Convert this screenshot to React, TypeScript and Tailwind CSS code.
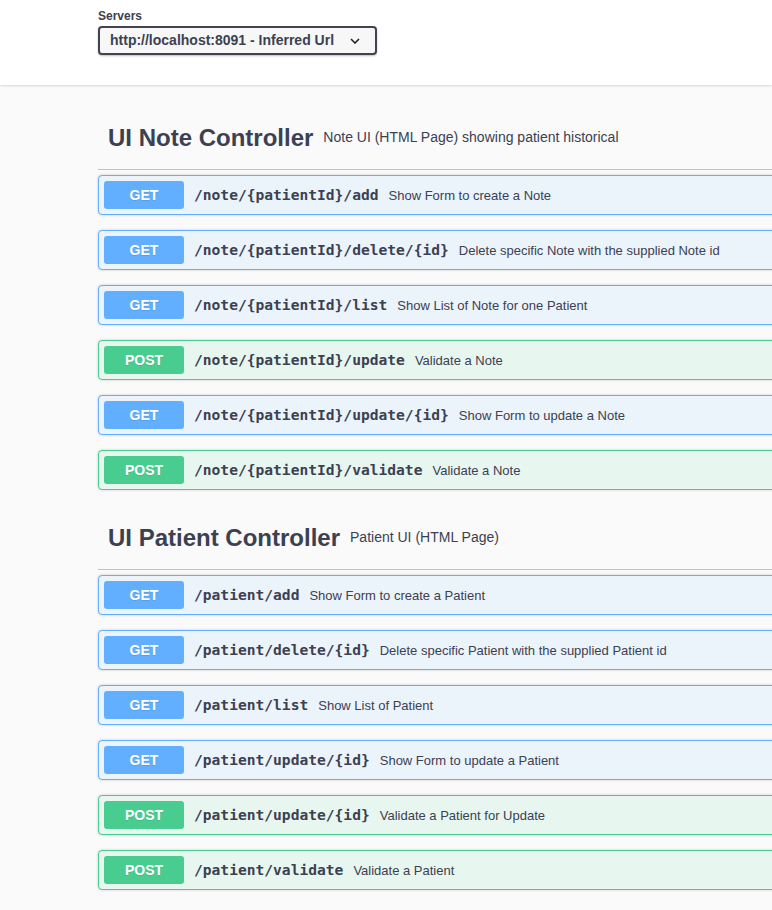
import React from "react";

type Op = { method: "GET" | "POST"; path: string; desc: string };

const noteOps: Op[] = [
  { method: "GET", path: "/note/{patientId}/add", desc: "Show Form to create a Note" },
  { method: "GET", path: "/note/{patientId}/delete/{id}", desc: "Delete specific Note with the supplied Note id" },
  { method: "GET", path: "/note/{patientId}/list", desc: "Show List of Note for one Patient" },
  { method: "POST", path: "/note/{patientId}/update", desc: "Validate a Note" },
  { method: "GET", path: "/note/{patientId}/update/{id}", desc: "Show Form to update a Note" },
  { method: "POST", path: "/note/{patientId}/validate", desc: "Validate a Note" },
];

const patientOps: Op[] = [
  { method: "GET", path: "/patient/add", desc: "Show Form to create a Patient" },
  { method: "GET", path: "/patient/delete/{id}", desc: "Delete specific Patient with the supplied Patient id" },
  { method: "GET", path: "/patient/list", desc: "Show List of Patient" },
  { method: "GET", path: "/patient/update/{id}", desc: "Show Form to update a Patient" },
  { method: "POST", path: "/patient/update/{id}", desc: "Validate a Patient for Update" },
  { method: "POST", path: "/patient/validate", desc: "Validate a Patient" },
];

function OpBlock({ op }: { op: Op }) {
  const get = op.method === "GET";
  return (
    <div
      className={
        "mb-[15px] flex h-[40px] items-center rounded-[4px] border px-[5px] shadow-[0_0_3px_rgba(0,0,0,0.19)] " +
        (get ? "border-[#61affe] bg-[#ebf3fb]" : "border-[#49cc90] bg-[#e8f6f0]")
      }
    >
      <span
        className={
          "flex h-[28px] w-[80px] shrink-0 items-center justify-center rounded-[3px] text-[14px] font-bold text-white [text-shadow:0_1px_0_rgba(0,0,0,0.1)] " +
          (get ? "bg-[#61affe]" : "bg-[#49cc90]")
        }
      >
        {op.method}
      </span>
      <span className="px-[10px] font-['DejaVu_Sans_Mono',monospace] text-[14.6px] font-bold text-[#3b4151] whitespace-nowrap">
        {op.path}
      </span>
      <span className="mt-[1px] text-[13px] text-[#3b4151] whitespace-nowrap">{op.desc}</span>
    </div>
  );
}

function Section({ title, desc, ops, first }: { title: string; desc: string; ops: Op[]; first?: boolean }) {
  return (
    <div>
      <h3
        className={
          "mb-[5px] flex items-center border-b border-[rgba(59,65,81,0.3)] pl-[10px] text-[#3b4151] " +
          (first ? "h-[64px]" : "h-[65px] pt-[1px]")
        }
      >
        <span className="text-[24px] font-bold">{title}</span>
        <small className="pl-[10px] text-[14px] font-normal">{desc}</small>
      </h3>
      {ops.map((op, i) => (
        <OpBlock key={i} op={op} />
      ))}
    </div>
  );
}

export default function App() {
  return (
    <div className="relative h-[910px] w-full overflow-hidden bg-[#fafafa] font-['Liberation_Sans',Arial,sans-serif]">
      <div className="relative h-[85px] bg-white shadow-[0_1px_2px_0_rgba(0,0,0,0.15)]">
        <div className="pl-[98px] pt-[9px]">
          <div className="text-[12px] font-bold leading-[15px] text-[#3b4151]">Servers</div>
          <div className="mt-[2px] flex h-[29px] w-[279px] items-center justify-between rounded-[4px] border-2 border-[#41444e] bg-[#f7f7f7] pl-[10px] pr-[15px] shadow-[0_1px_2px_0_rgba(0,0,0,0.25)]">
            <span className="text-[14px] font-bold text-[#3b4151]">http://localhost:8091 - Inferred Url</span>
            <svg width="10" height="6" viewBox="0 0 10 6" className="mt-[1px]">
              <path d="M1 1 L5 5 L9 1" fill="none" stroke="#222" strokeWidth="1.6" />
            </svg>
          </div>
        </div>
      </div>
      <div className="w-[1000px] pl-[98px] pt-[21px]">
        <Section first title="UI Note Controller" desc="Note UI (HTML Page) showing patient historical" ops={noteOps} />
        <Section title="UI Patient Controller" desc="Patient UI (HTML Page)" ops={patientOps} />
      </div>
    </div>
  );
}
